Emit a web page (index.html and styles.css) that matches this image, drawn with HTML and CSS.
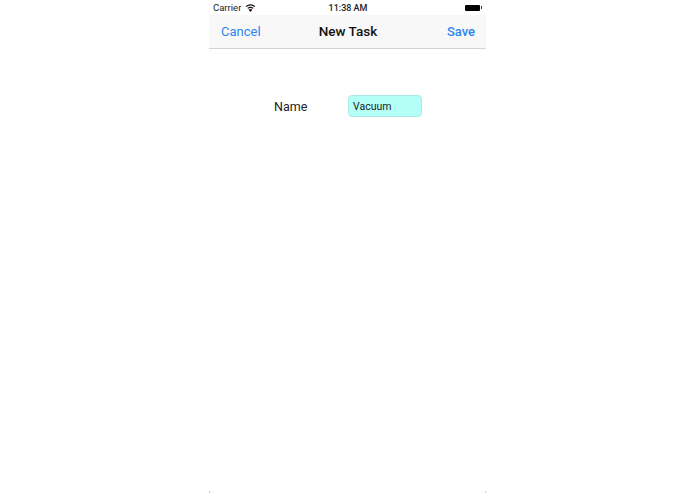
FILE: index.html
```html
<!DOCTYPE html>
<html lang="en">
<head>
    <meta charset="UTF-8">
    <meta name="viewport" content="width=device-width, initial-scale=1.0">
    <title>New Task</title>
    <link rel="stylesheet" href="styles.css">
</head>
<body>
    <div class="tela">
        <div class="status">
            <div class="status_esquerda">
                <span>Carrier</span>
                <svg class="status_wifi" width="11" height="8" viewBox="0 0 11 8">
                    <path d="M5.5 8 L3.6 5.7 A3 3 0 0 1 7.4 5.7 Z" fill="#111"/>
                    <path d="M2.8 4.4 A4.3 4.3 0 0 1 8.2 4.4" fill="none" stroke="#111" stroke-width="1.2"/>
                    <path d="M1.1 2.6 A6.5 6.5 0 0 1 9.9 2.6" fill="none" stroke="#111" stroke-width="1.2"/>
                </svg>
            </div>
            <div class="status_hora">11:38 AM</div>
            <div class="status_direita">
                <div class="bateria"></div>
                <div class="bateria_ponta"></div>
            </div>
        </div>
        <div class="nav">
            <div class="nav_botao">Cancel</div>
            <div class="nav_titulo">New Task</div>
            <div class="nav_botao nav_botao-salvar">Save</div>
        </div>
        <div class="campo">
            <div class="campo_nome">Name</div>
            <div class="campo_valor">Vacuum</div>
        </div>
        <div class="marca marca-esquerda"></div>
        <div class="marca marca-direita"></div>
    </div>
</body>
</html>
```

FILE: styles.css
```css
*{border: 0;margin: 0;padding: 0;box-sizing: border-box;}
body{
    height: 494px;
    overflow: hidden;
    background-color: #fff;
    font-family: Roboto, 'Liberation Sans', Arial, sans-serif;
}
.tela{
    width: 277px;
    height: 494px;
    margin: 0 auto;
    position: relative;
}
.status{
    height: 15px;
    display: grid;
    grid-template-columns: 1fr auto 1fr;
    align-items: center;
    padding: 0 4px;
    background-color: #fff;
    font-size: 9.5px;
    color: #222;
}
.status_esquerda{
    display: flex;
    align-items: center;
    gap: 4px;
}
.status_hora{
    margin-left: 1px;
    font-size: 9px;
    font-weight: 500;
    color: #222;
}
.status_direita{
    display: flex;
    justify-content: flex-end;
    align-items: center;
}
.bateria{
    width: 15px;
    height: 6px;
    background-color: #000;
    border-radius: 1px;
}
.bateria_ponta{
    width: 1px;
    height: 3px;
    margin-left: 1px;
    background-color: #333;
}
.nav{
    height: 34px;
    display: grid;
    grid-template-columns: 1fr auto 1fr;
    align-items: center;
    padding: 0 11px 1px 12px;
    background-color: #f8f8f8;
    border-bottom: 1px solid #d4d4d4;
}
.nav_botao{
    font-size: 13px;
    color: #2d86ee;
}
.nav_botao-salvar{
    font-weight: 500;
    text-align: right;
}
.nav_titulo{
    font-size: 13.5px;
    font-weight: 500;
    color: #111;
}
.campo{
    display: flex;
    align-items: center;
    margin-top: 46px;
    padding-left: 65px;
}
.campo_nome{
    width: 74px;
    font-size: 12.5px;
    color: #222;
}
.campo_valor{
    width: 74px;
    height: 22px;
    padding-left: 4px;
    line-height: 21px;
    font-size: 10.5px;
    color: #222;
    background-color: #b4fff6;
    border: 1px solid #a8ece4;
    border-radius: 4px;
}
.marca{
    position: absolute;
    bottom: 1px;
    width: 1px;
    height: 2px;
    background-color: #ccc;
}
.marca-esquerda{
    left: 0;
}
.marca-direita{
    right: 0;
}
```
